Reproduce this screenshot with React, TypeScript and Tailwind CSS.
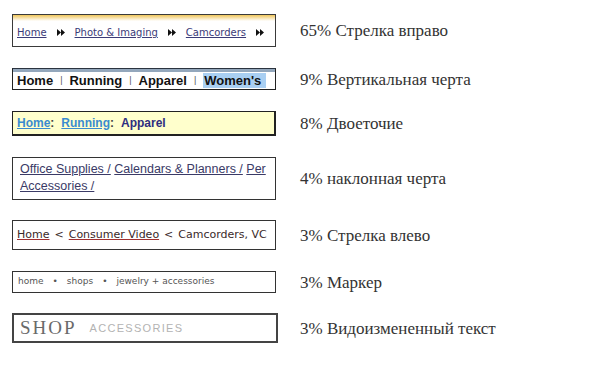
import React from 'react';

function DoubleArrow() {
  return (
    <svg width="8" height="7" viewBox="0 0 8 7" className="mx-[10px] inline-block">
      <path d="M0 0 L4 3.5 L0 7 Z M4 0 L8 3.5 L4 7 Z" fill="#111" />
    </svg>
  );
}

function Row({ mt, label, children }: { mt: string; label: string; children: React.ReactNode }) {
  return (
    <div className={`flex items-center ${mt}`}>
      <div className="ml-[12px] w-[264px] shrink-0">{children}</div>
      <div className="ml-[24px] text-[17px] text-[#333] font-['Liberation_Serif',serif] leading-none whitespace-nowrap">
        {label}
      </div>
    </div>
  );
}

export default function App() {
  return (
    <div className="w-[590px] h-[366px] bg-white flex flex-col overflow-hidden">
      {/* Стрелка вправо */}
      <Row mt="mt-[14px]" label="65% Стрелка вправо">
        <div className="h-[33px] border border-[#3a3a3a] bg-[linear-gradient(#efc55a,#fff_6px)] flex items-center pl-[4px] pt-[4px] font-['DejaVu_Sans',sans-serif] text-[10px] text-[#3b3b78]">
          <span className="underline">Home</span>
          <DoubleArrow />
          <span className="underline">Photo &amp; Imaging</span>
          <DoubleArrow />
          <span className="underline">Camcorders</span>
          <DoubleArrow />
        </div>
      </Row>

      {/* Вертикальная черта */}
      <Row mt="mt-[21px]" label="9% Вертикальная черта">
        <div className="h-[22px] border border-[#222] border-t-[#2b3440]">
          <div className="h-full border-t-[3px] border-[#93a7bc] flex items-center pl-[4px] font-['Liberation_Sans',sans-serif] font-bold text-[13px] text-[#111]">
            <span>Home</span>
            <span className="mx-[7px] font-normal text-[9px] text-[#555]">|</span>
            <span>Running</span>
            <span className="mx-[7px] font-normal text-[9px] text-[#555]">|</span>
            <span>Apparel</span>
            <span className="mx-[7px] font-normal text-[9px] text-[#555]">|</span>
            <span className="bg-[#a9cff2] pl-[1px] pr-[5px] leading-[15px]">Women's</span>
          </div>
        </div>
      </Row>

      {/* Двоеточие */}
      <Row mt="mt-[21px]" label="8% Двоеточие">
        <div className="h-[25px] border border-[#222] border-r-2 border-b-2 bg-[#ffffcc] flex items-center pl-[4px] font-['Liberation_Sans',sans-serif] font-bold text-[12px]">
          <span className="text-[#3a8bd0] underline">Home</span>
          <span className="text-[#444] mr-[7px]">:</span>
          <span className="text-[#3a8bd0] underline">Running</span>
          <span className="text-[#444] mr-[7px]">:</span>
          <span className="text-[#2e2e80]">Apparel</span>
        </div>
      </Row>

      {/* Наклонная черта */}
      <Row mt="mt-[21px]" label="4% наклонная черта">
        <div className="h-[43px] border border-[#333] overflow-hidden pl-[7px] pt-[3px] font-['Liberation_Sans',sans-serif] text-[12.5px] leading-[17px] text-[#3a3a66]">
          <div className="whitespace-nowrap">
            <span className="underline">Office Supplies /</span>{' '}
            <span className="underline">Calendars &amp; Planners /</span>{' '}
            <span className="underline">Per</span>
          </div>
          <div className="whitespace-nowrap">
            <span className="underline">Accessories /</span>
          </div>
        </div>
      </Row>

      {/* Стрелка влево */}
      <Row mt="mt-[20px]" label="3% Стрелка влево">
        <div className="h-[30px] border border-[#333] overflow-hidden flex items-center pl-[4px] whitespace-nowrap font-['DejaVu_Sans',sans-serif] text-[11px] text-[#3a2a2a]">
          <span className="underline decoration-[#a03030]">Home</span>
          <span className="mx-[5px]">&lt;</span>
          <span className="underline decoration-[#a03030]">Consumer Video</span>
          <span className="mx-[5px]">&lt;</span>
          <span>Camcorders, VC</span>
        </div>
      </Row>

      {/* Маркер */}
      <Row mt="mt-[21px]" label="3% Маркер">
        <div className="h-[22px] border border-[#333] flex items-center pl-[5px] font-['DejaVu_Sans',sans-serif] text-[9px] text-[#555]">
          <span>home</span>
          <span className="mx-[9px] text-[9px]">•</span>
          <span>shops</span>
          <span className="mx-[9px] text-[9px]">•</span>
          <span>jewelry + accessories</span>
        </div>
      </Row>

      {/* Видоизмененный текст */}
      <Row mt="mt-[20px]" label="3% Видоизмененный текст">
        <div className="h-[30px] w-[266px] border-2 border-[#444] flex items-center pl-[6px]">
          <span className="font-['Liberation_Serif',serif] text-[19px] tracking-[2px] text-[#6a6a6a]">SHOP</span>
          <span className="ml-[13px] font-['Liberation_Sans',sans-serif] text-[11px] tracking-[1.3px] text-[#b3b3b3]">ACCESSORIES</span>
        </div>
      </Row>
    </div>
  );
}
